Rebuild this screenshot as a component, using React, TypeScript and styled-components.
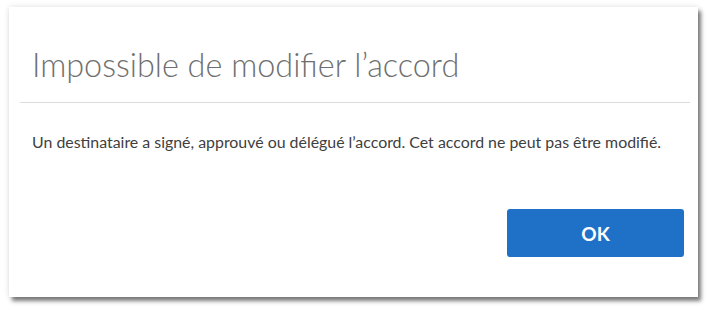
import React from "react";
import styled, { createGlobalStyle } from "styled-components";

const GlobalStyle = createGlobalStyle`
  html, body {
    margin: 0;
    background: #ffffff;
  }
  body {
    box-sizing: border-box;
    min-height: 310px;
    padding: 7px 0 13px 9px;
  }
`;

const Dialog = styled.div`
  box-sizing: border-box;
  width: 689px;
  height: 290px;
  background: #ffffff;
  display: flex;
  flex-direction: column;
  box-shadow: 3px 4px 4px rgba(0, 0, 0, 0.5), 0 0 6px rgba(0, 0, 0, 0.12);
`;

const Header = styled.div`
  margin: 0 8px 0 11px;
  padding: 39px 0 18px 12px;
  border-bottom: 1px solid #dcdcdc;
`;

const Title = styled.h1`
  margin: 0;
  font-family: Lato, "Open Sans", sans-serif;
  font-weight: 300;
  font-size: 32.4px;
  line-height: 38px;
  color: #6f6f6f;
`;

const Body = styled.p`
  margin: 0;
  padding: 29px 23px 0;
  font-family: Lato, "Open Sans", sans-serif;
  font-size: 15.9px;
  line-height: 20px;
  color: #404040;
`;

const Footer = styled.div`
  margin-top: auto;
  display: flex;
  justify-content: flex-end;
  padding: 0 14px 40px;
`;

const OkButton = styled.button`
  width: 177px;
  height: 48px;
  border: none;
  border-radius: 3px;
  background: #1f71c7;
  color: #ffffff;
  font-family: Lato, "Open Sans", sans-serif;
  font-weight: 700;
  font-size: 19px;
  cursor: pointer;
`;

export default function App() {
  return (
    <>
      <GlobalStyle />
      <Dialog>
        <Header>
          <Title>Impossible de modifier l’accord</Title>
        </Header>
        <Body>
          Un destinataire a signé, approuvé ou délégué l’accord. Cet accord ne peut pas être modifié.
        </Body>
        <Footer>
          <OkButton>OK</OkButton>
        </Footer>
      </Dialog>
    </>
  );
}
